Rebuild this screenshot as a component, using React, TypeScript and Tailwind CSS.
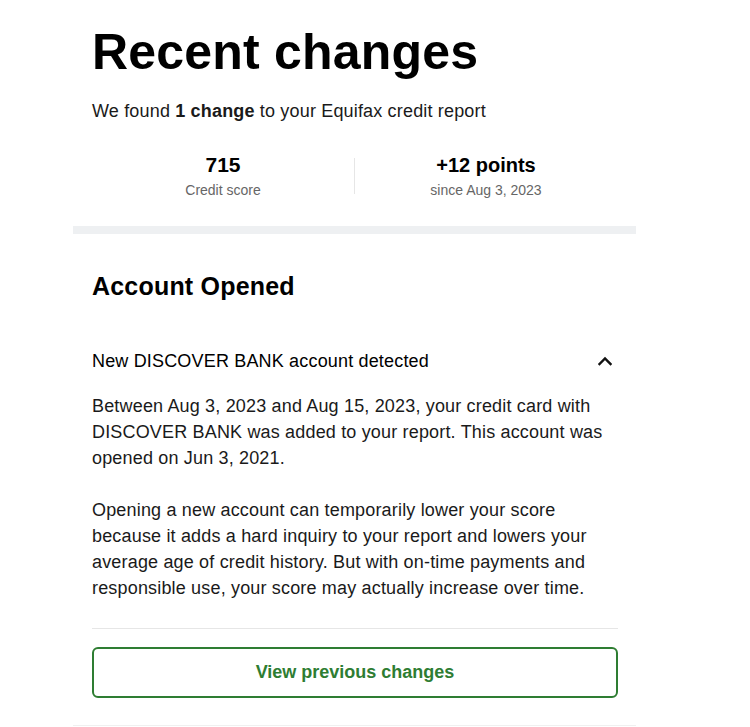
export default function App() {
  const font = { fontFamily: '"Liberation Sans", Arial, sans-serif' };
  return (
    <div className="min-h-[727px] w-full bg-white text-[#1a1a1a]" style={font}>
      <div className="ml-[73px] w-[563px]">
        {/* Header */}
        <div className="px-[19px] pt-[22px]">
          <h1 className="text-[50px] leading-[60px] font-bold tracking-[0.2px] text-black">
            Recent changes
          </h1>
          <p className="mt-[16px] text-[18px] leading-[26px] tracking-[0.17px]">
            We found <span className="font-bold">1 change</span> to your Equifax credit report
          </p>
        </div>

        {/* Stats */}
        <div className="mt-[27px] flex items-center px-[19px]">
          <div className="flex-1 text-center">
            <div className="text-[21px] leading-[28px] font-bold text-black">715</div>
            <div className="mt-[1px] text-[14px] leading-[20px] text-[#666]">Credit score</div>
          </div>
          <div className="h-[36px] w-px bg-[#e6e6e6]" />
          <div className="flex-1 text-center">
            <div className="text-[20px] leading-[28px] font-bold text-black">+12 points</div>
            <div className="mt-[1px] text-[14px] leading-[20px] text-[#666]">since Aug 3, 2023</div>
          </div>
        </div>

        <div className="mt-[26px] h-[8px] bg-[#eef0f2]" />

        {/* Change detail */}
        <div className="pl-[19px] pr-[18px] pb-[27px] border-b border-[#f0f0f0]">
          <h2 className="mt-[36px] text-[25px] leading-[32px] font-bold tracking-[0.2px] text-black">
            Account Opened
          </h2>

          <div className="mt-[46px] flex items-center justify-between">
            <h3 className="text-[18px] leading-[26px] tracking-[0.17px] text-black">
              New DISCOVER BANK account detected
            </h3>
            <svg width="14" height="10" viewBox="0 0 14 10" className="mr-[6px]">
              <polyline
                points="1.5,8 7,2.5 12.5,8"
                fill="none"
                stroke="#111"
                strokeWidth="2.4"
                strokeLinecap="square"
              />
            </svg>
          </div>

          <div className="text-[18px] leading-[26px] tracking-[0.17px]">
            <p className="mt-[19px]">
              Between Aug 3, 2023 and Aug 15, 2023, your credit card with DISCOVER BANK was added
              to your report. This account was opened on Jun 3, 2021.
            </p>
            <p className="mt-[26px]">
              Opening a new account can temporarily lower your score because it adds a hard
              inquiry to your report and lowers your average age of credit history. But with
              on-time payments and responsible use, your score may actually increase over time.
            </p>
          </div>

          <div className="mt-[27px] h-px bg-[#e6e6e6]" />

          <button className="mt-[18px] flex h-[51px] w-full items-center justify-center rounded-[6px] border-2 border-[#2e7d32] text-[18px] font-bold text-[#2e7d32]">
            View previous changes
          </button>
        </div>
      </div>
    </div>
  );
}
